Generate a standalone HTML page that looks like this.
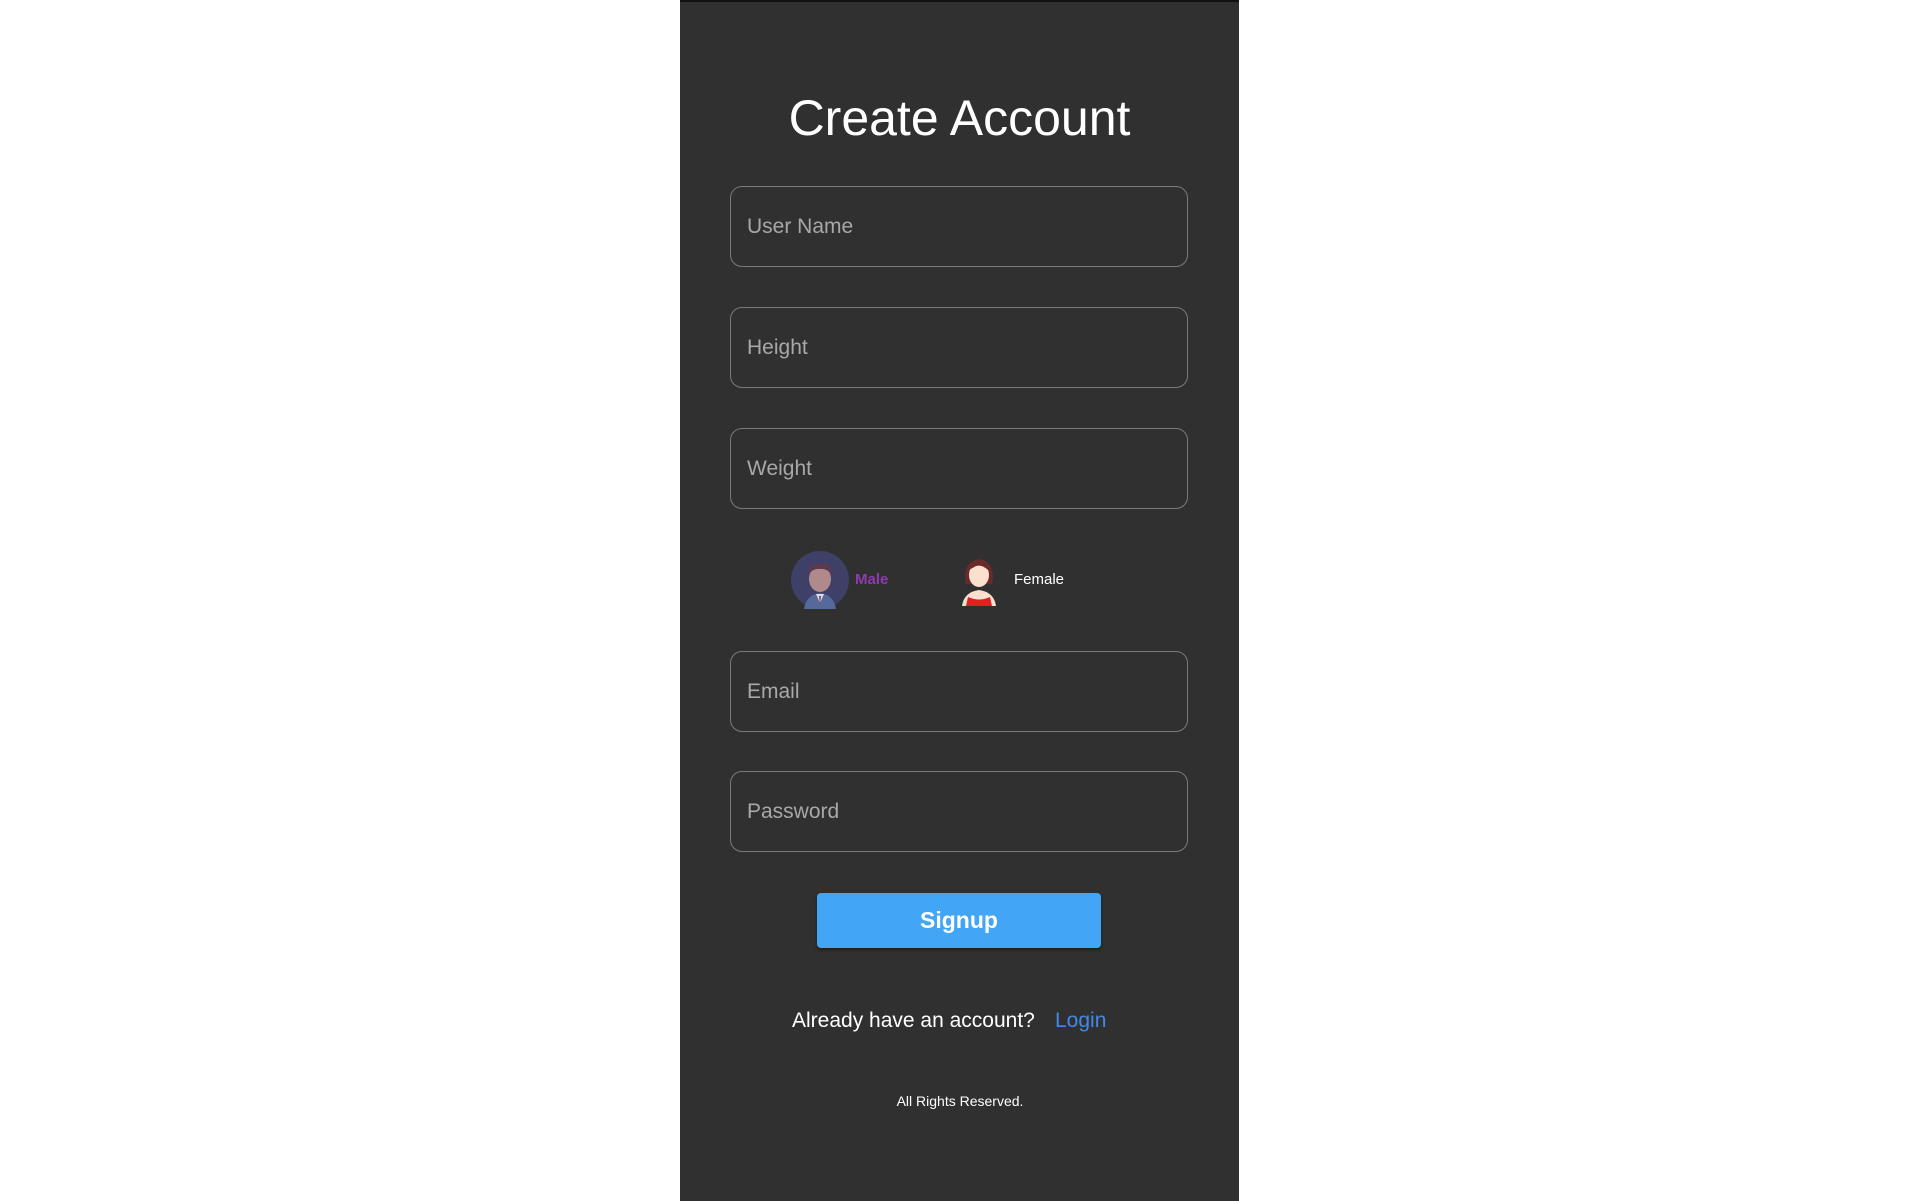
<!DOCTYPE html>
<html><head><meta charset="utf-8"><style>
html,body{margin:0;padding:0;width:1920px;height:1201px;background:#fff;overflow:hidden;font-family:"Liberation Sans",sans-serif}
#p{position:absolute;left:680px;top:0;width:559px;height:1201px;background:#303030;border-top:2px solid #111;box-sizing:border-box}
.t{position:absolute;left:0;width:1920px;text-align:center}
h1{position:absolute;left:680px;width:559px;top:88px;margin:0;text-align:center;color:#fff;font-weight:normal;font-size:50px;line-height:60px}
.in{position:absolute;left:730px;width:458px;border:1.5px solid #7a7a7a;border-radius:12px;box-sizing:border-box;color:#a8a8a8;font-size:21px;padding-left:16px;display:flex;align-items:center}
.btn{position:absolute;left:817px;top:893px;width:284px;height:55px;background:#42a5f5;border-radius:4px;color:#fff;font-weight:bold;font-size:23px;display:flex;align-items:center;justify-content:center;box-shadow:0 2px 3px rgba(0,0,0,.4)}
</style></head><body>
<div id="p"></div>
<h1>Create Account</h1>
<div class="in" style="top:186px;height:81px">User Name</div>
<div class="in" style="top:307px;height:81px">Height</div>
<div class="in" style="top:428px;height:81px">Weight</div>
<svg style="position:absolute;left:791px;top:551px" width="58" height="58" viewBox="0 0 58 58">
<circle cx="29" cy="29" r="29" fill="#3f4068"/>
<path d="M13 58 Q15 44 29 42 Q43 44 45 58Z" fill="#556a9a"/>
<path d="M25 43 L29 52 L33 43Z" fill="#ddd"/><path d="M28 45 L30 45 L29 54Z" fill="#8a3a6a"/>
<ellipse cx="29" cy="28" rx="11" ry="13" fill="#b08a8a"/>
<path d="M17 24 Q18 11 29 12 Q41 11 41 24 Q36 17 29 18 Q22 17 17 24Z" fill="#5a3a50"/>
</svg>
<div style="position:absolute;left:855px;top:571px;color:#8e3bb0;font-weight:bold;font-size:15px">Male</div>
<svg style="position:absolute;left:958px;top:553px" width="42" height="54" viewBox="0 0 42 52">
<path d="M8 30 Q4 8 21 5 Q38 8 34 30 Z" fill="#6b2a2a"/>
<ellipse cx="21" cy="21" rx="10" ry="12" fill="#fbe0d0"/>
<path d="M11 16 Q14 6 21 7 Q30 6 32 18 Q25 10 18 12Z" fill="#6b2a2a"/>
<path d="M4 52 Q6 38 21 36 Q36 38 38 52Z" fill="#fbe0d0"/>
<path d="M8 52 L10 43 Q21 48 32 43 L34 52Z" fill="#e02020"/>
</svg>
<div style="position:absolute;left:1014px;top:571px;color:#fff;font-size:15px">Female</div>
<div class="in" style="top:651px;height:81px">Email</div>
<div class="in" style="top:771px;height:81px">Password</div>
<div class="btn">Signup</div>
<div style="position:absolute;left:792px;top:1009px;color:#fff;font-size:21px">Already have an account?</div>
<div style="position:absolute;left:1055px;top:1009px;color:#3f8ae8;font-size:21px">Login</div>
<div class="t" style="top:1093px;color:#fff;font-size:14px">All Rights Reserved.</div>
</body></html>
